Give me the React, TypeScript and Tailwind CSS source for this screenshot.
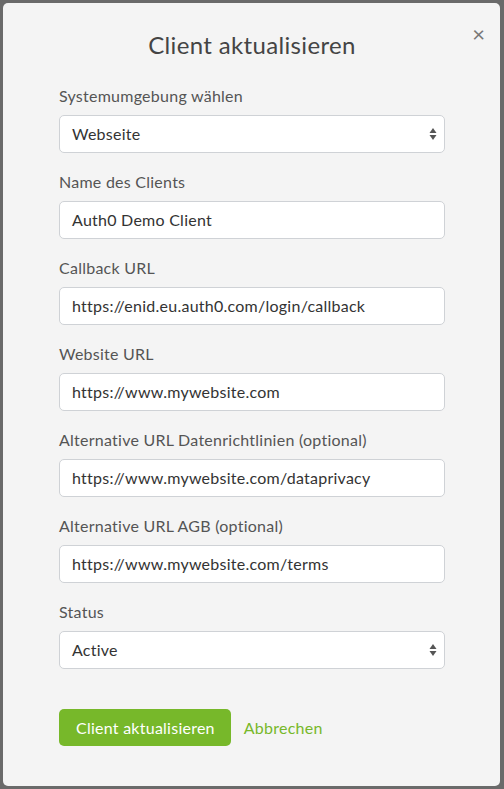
const fields = [
  { label: "Systemumgebung wählen", value: "Webseite", select: true },
  { label: "Name des Clients", value: "Auth0 Demo Client" },
  { label: "Callback URL", value: "https://enid.eu.auth0.com/login/callback" },
  { label: "Website URL", value: "https://www.mywebsite.com" },
  { label: "Alternative URL Datenrichtlinien (optional)", value: "https://www.mywebsite.com/dataprivacy" },
  { label: "Alternative URL AGB (optional)", value: "https://www.mywebsite.com/terms" },
  { label: "Status", value: "Active", select: true },
];

function SelectArrows() {
  return (
    <svg width="8" height="14" viewBox="0 0 8 14" className="shrink-0">
      <path d="M4 1 L7.5 6 L0.5 6 Z" fill="#555" />
      <path d="M4 13 L7.5 8 L0.5 8 Z" fill="#555" />
    </svg>
  );
}

function Field({ label, value, select }: { label: string; value: string; select?: boolean }) {
  return (
    <div className="flex flex-col">
      <label className="text-[16px] leading-[24px] tracking-[0.25px] text-[#555]">{label}</label>
      <div className="mt-[7px] h-[38px] flex items-center justify-between bg-white border border-[#cfd2d6] rounded-[5px] pl-[12px] pr-[7px] text-[16px] tracking-[0.25px] text-[#333]">
        <span>{value}</span>
        {select && <SelectArrows />}
      </div>
    </div>
  );
}

export default function App() {
  return (
    <div
      className="w-[504px] h-[789px] bg-[#6a6a6a] pt-[3px] pl-[3px] pr-[4px] pb-[3px]"
      style={{ fontFamily: "Lato, 'Open Sans', sans-serif" }}
    >
      <div className="relative h-full bg-[#f4f4f4] rounded-[5px] pl-[56px] pr-[55px] pt-[27px] pb-[40px] flex flex-col">
        <button className="absolute right-[15px] top-[20px] text-[22px] leading-none text-[#777]">×</button>
        <h1 className="text-center text-[24px] leading-[30px] tracking-[0.35px] text-[#444]">Client aktualisieren</h1>
        <div className="mt-[24px] flex flex-col gap-[17px]">
          {fields.map((f) => (
            <Field key={f.label} {...f} />
          ))}
        </div>
        <div className="mt-[40px] flex items-center gap-[13px]">
          <button className="h-[37px] pl-[17px] pr-[16px] bg-[#77b82a] text-white rounded-[5px] text-[16px] tracking-[0.25px]">
            Client aktualisieren
          </button>
          <span className="text-[16px] tracking-[0.25px] text-[#77b82a]">Abbrechen</span>
        </div>
      </div>
    </div>
  );
}
